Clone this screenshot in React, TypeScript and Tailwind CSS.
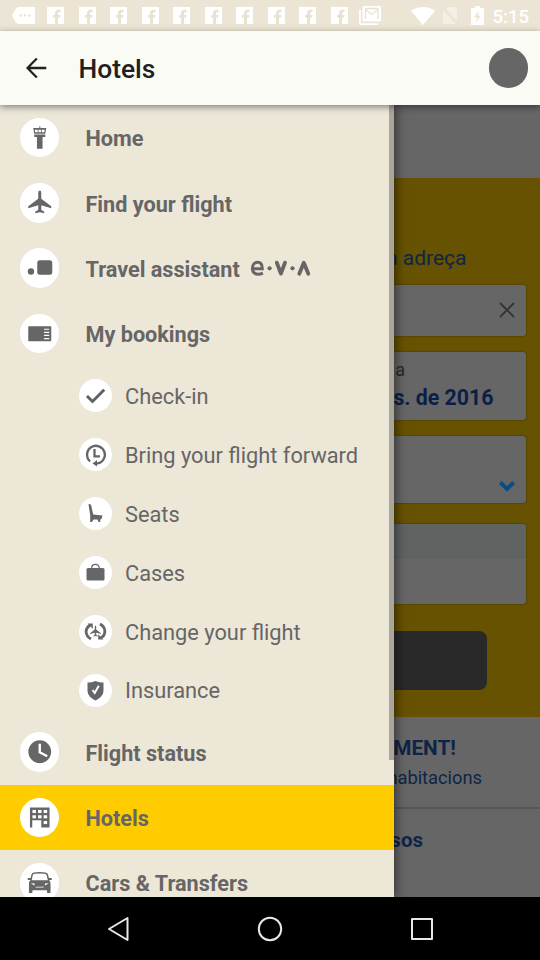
import type { ReactNode } from "react";

const G = "#666666";

function FacebookIcon() {
  return (
    <svg className="mr-[14.500px] h-[17px] w-[17px] shrink-0" viewBox="0 0 17 17">
      <path fill="#fff" d="M0 0H17V17H0Z" />
      <path fill="#e9e2d0" d="M8 17V10.600H6V8H8V6.200C8 4.100 9.200 2.800 11.300 2.800H13.600V5.300H12.200C11.300 5.300 11 5.700 11 6.500V8H13.500L13.100 10.600H11V17Z" />
    </svg>
  );
}

function StatusBar() {
  return (
    <div className="flex h-[31px] shrink-0 items-center bg-[#ece5d5] pl-[12px]">
      <svg className="mr-[12px] h-[17px] w-[23px] shrink-0" viewBox="0 0 23 17">
        <path fill="#fff" d="M7 0H23V17H7C5 17 3.8 15.500 3 14L0 8.500L3 3C4 1 5 0 7 0Z" />
        <g fill="#ece5d5">
          <circle cx="8.500" cy="8.500" r="1.300" />
          <circle cx="13" cy="8.500" r="1.300" />
          <circle cx="17.500" cy="8.500" r="1.300" />
        </g>
      </svg>
      {Array.from({ length: 10 }, (_, i) => (
        <FacebookIcon key={i} />
      ))}
      <svg className="-ml-[3px] h-[19px] w-[22px] shrink-0" viewBox="0 0 22 19">
        <path fill="#fff" d="M0 4H1.800V17.200H19V19H2C.8 19 0 18.200 0 17Z" />
        <rect x="3.500" width="18.500" height="15.500" rx="1.500" fill="#fff" />
        <path fill="none" stroke="#e9e1d1" strokeWidth="1.300" d="M6.500 13V3.500L12.700 8.500L19 3.500V13M6.500 2.500H19" />
      </svg>
      <svg className="ml-[29.500px] h-[18px] w-[24px] shrink-0" viewBox="0 0 24 18">
        <path fill="#fff" d="M12 18L0 4C7-1.300 17-1.300 24 4Z" />
      </svg>
      <svg className="ml-[8px] h-[17px] w-[14px] shrink-0" viewBox="0 0 14 17">
        <path fill="#f5eee6" d="M5 0H14V14L3 2ZM0 3L13 17H1C.3 17 0 16.600 0 16Z" />
      </svg>
      <svg className="ml-[14px] h-[19px] w-[13px] shrink-0" viewBox="0 0 13 19">
        <path fill="#fff" fillRule="evenodd" d="M4 0H9V2H12C12.600 2 13 2.400 13 3V18C13 18.600 12.600 19 12 19H1C.4 19 0 18.600 0 18V3C0 2.400.4 2 1 2H4ZM8 4.500L2.800 11.300H6L5 16.500L10.300 9.500H7Z" />
      </svg>
      <span className="ml-[9px] pt-[3px] text-[18.600px] leading-none font-medium text-white">5:15</span>
    </div>
  );
}

function Header() {
  return (
    <header className="relative z-20 flex h-[74px] shrink-0 items-center bg-[#fafbf4] pl-[26px] pr-[12px] shadow-[0_2px_7px_rgba(0,0,0,0.45)]">
      <svg className="h-[22px] w-[22px]" viewBox="0 0 22 22" fill="none" stroke="#20201e" strokeWidth="2.300">
        <path d="M20.300 11H2M10.800 1.500L1.500 11L10.800 20.500" />
      </svg>
      <h1 className="ml-[30.500px] pt-[3px] text-[26.400px] leading-none font-medium text-[#20201e]">Hotels</h1>
      <div className="ml-auto h-[39.500px] w-[39.500px] rounded-full bg-[#666]" />
    </header>
  );
}

const planePath =
  "M-1.500-9.500C-1.500-12-.8-12 0-12S1.500-12 1.500-9.500V-4L11.500 3.500V5.500L1.500 2.500V7L4.500 9V10.500L0 9.500L-4.500 10.500V9L-1.500 7V2.500L-11.500 5.500V3.500L-1.500-4Z";

const icons: Record<string, ReactNode> = {
  tower: (
    <g fill={G}>
      <path d="M-.4-11.500H.6V-9H-.4Z" />
      <path fillRule="evenodd" d="M-6.500-9.800H6.500L5.500-4H-5.500ZM-5-8L-4.500-5.500H-2V-8ZM-1.200-8V-5.500H1.200V-8ZM2-8V-5.500H4.500L5-8Z" />
      <path d="M-5.500-3.300H5.500V-.8H2.800V11H-2.800V-.8H-5.500Z" />
    </g>
  ),
  plane: <path fill={G} d={planePath} />,
  eva: (
    <g fill={G}>
      <circle cx="-8.800" cy="3.700" r="3.200" />
      <rect x="-2.500" y="-7.500" width="15" height="14.500" rx="2.500" />
    </g>
  ),
  ticket: (
    <g>
      <rect x="-11.500" y="-7.500" width="23" height="15" rx=".7" fill={G} />
      <path stroke="#fff" strokeWidth="1.200" d="M4.300-4.500H9.500M4.300-1.400H9.500M4.300 1.700H9.500M4.300 4.800H9.500" />
    </g>
  ),
  check: <path fill="none" stroke="#5c6262" strokeWidth="2.900" d="M-8.500 .5L-3 6L8.700-5.800" />,
  forward: (
    <g fill="none" stroke={G} strokeWidth="2.300">
      <path d="M-5.400 6.900A8.900 8.900 0 1 1 1 9.100" />
      <path d="M-1-5.500V1.800H4.500" />
      <path fill={G} stroke="none" d="M-3 9L1.500 5.500V12Z" />
    </g>
  ),
  seat: <path fill={G} d="M-7-9.500L-4.500-9L-2.300 1L7 2L6 5.500L4.700 6V8.500H3L2 6H-2L-3.500 8.500H-5.300V2Z" />,
  case: (
    <g>
      <rect x="-9" y="-4.500" width="18" height="12.500" rx="1.500" fill={G} />
      <path fill="none" stroke={G} strokeWidth="1.200" d="M-3.800-4.500C-3.800-9.300 3.800-9.300 3.800-4.500" />
    </g>
  ),
  change: (
    <g>
      <g fill="none" stroke={G} strokeWidth="2.800">
        <path d="M-4.500 7.500C-10.800 4-10.800-3-5.500-6.300" />
        <path d="M4.500-7.500C10.800-4 10.800 3 5.500 6.300" />
      </g>
      <path fill={G} d="M-8-8H-2.700V-2.700ZM8 8H2.700V2.700Z" />
      <path fill={G} transform="scale(.47)" d={planePath} />
    </g>
  ),
  shield: (
    <g>
      <path fill={G} d="M0-9.500C3-8.500 5.500-8 8-8V0C8 5 4 8 0 10C-4 8-8 5-8 0V-8C-5.500-8-3-8.500 0-9.500Z" />
      <path fill="none" stroke="#fff" strokeWidth="2" d="M-3-.5L-.8 2.500L3.300-4.800" />
    </g>
  ),
  clock: (
    <g>
      <circle r="11.400" fill={G} />
      <path fill="none" stroke="#fff" strokeWidth="2.400" d="M0-8V.5L7.500 4.500" />
    </g>
  ),
  hotel: (
    <g>
      <path fill={G} d="M-9.800-10.300H9.800V9.700H1.500V2.500H-7.500V9.700H-9.800Z" />
      <g fill="#fff">
        {[-7.3, -1.700, 3.900].flatMap((x) =>
          [-7.800, -2.500].map((y) => <rect key={`${x}/${y}`} x={x} y={y} width="3.500" height="3.100" />),
        )}
        <rect x="3.900" y="3.200" width="3.500" height="3.100" />
      </g>
    </g>
  ),
  car: (
    <g>
      <path fill="none" stroke={G} strokeWidth="1.500" d="M-9-2L-7.500-8.300C-7.200-9.500-6-10 0-10S7.200-9.500 7.500-8.300L9-2" />
      <path fill={G} fillRule="evenodd" d="M-9-2.500H9C10.800-1.500 10.800 0 10.800 2V9.500C10.800 10.700 7.300 10.700 7.300 9.500V7.500H-7.300V9.500C-7.300 10.700-10.800 10.700-10.800 9.500V2C-10.800 0-10.800-1.500-9-2.500ZM-9 .8L-5 2.800L-5.500 .5ZM9 .8L5 2.800L5.500 .5ZM-4 4.700H4V3.900H-4Z" />
      <path stroke={G} strokeWidth="2" d="M-12-3.700H-8.500M8.500-3.700H12" />
    </g>
  ),
};

function MenuItem({ icon, label, active, logo }: { icon: string; label: string; active?: boolean; logo?: boolean }) {
  return (
    <div className={`flex h-[65.300px] shrink-0 items-center pl-[19.800px] ${active ? "bg-[#ffcc00]" : ""}`}>
      <svg className="h-[39.500px] w-[39.500px] shrink-0 rounded-full bg-white" viewBox="-19.750 -19.750 39.500 39.500">
        {icons[icon]}
      </svg>
      <span className="ml-[26.200px] pt-[3px] text-[21.650px] leading-none font-bold whitespace-nowrap text-[#666]">{label}</span>
      {logo && (
        <svg className="ml-[10px] h-[18px] w-[62px]" viewBox="0 0 62 18" fill="none" stroke={G}>
          <path d="M2.500 9.700H12.300C12.300 5.500 10.800 3.200 7.700 3.200C4.500 3.200 2.400 5.600 2.400 9.300C2.400 13.200 4.500 15.200 8.200 15.200C10 15.200 11.500 14.800 12.900 14.100" strokeWidth="3" />
          <path d="M26.800 3.600L30.900 14.600L35 3.600M49.300 14.800L53.800 3.800L58.300 14.800" strokeWidth="3.800" strokeLinejoin="round" strokeLinecap="round" />
          <circle cx="19.600" cy="9.300" r="2.100" fill={G} stroke="none" />
          <circle cx="42.500" cy="9.300" r="2.100" fill={G} stroke="none" />
        </svg>
      )}
    </div>
  );
}

function SubItem({ icon, label }: { icon: string; label: string }) {
  return (
    <div className="flex h-[58.900px] shrink-0 items-center pl-[79px]">
      <svg className="h-[33px] w-[33px] shrink-0 rounded-full bg-white" viewBox="-16.500 -16.500 33 33">
        {icons[icon]}
      </svg>
      <span className="ml-[13px] pt-[2.600px] text-[21.800px] leading-none whitespace-nowrap text-[#666]">{label}</span>
    </div>
  );
}

function Drawer() {
  return (
    <nav className="absolute inset-y-0 left-0 z-10 w-[393.500px] bg-[#ede7d8] shadow-[2px_0_10px_rgba(0,0,0,0.5)]">
      <div className="flex flex-col">
        <MenuItem icon="tower" label="Home" />
        <MenuItem icon="plane" label="Find your flight" />
        <MenuItem icon="eva" label="Travel assistant" logo />
        <MenuItem icon="ticket" label="My bookings" />
        <SubItem icon="check" label="Check-in" />
        <SubItem icon="forward" label="Bring your flight forward" />
        <SubItem icon="seat" label="Seats" />
        <SubItem icon="case" label="Cases" />
        <SubItem icon="change" label="Change your flight" />
        <SubItem icon="shield" label="Insurance" />
        <MenuItem icon="clock" label="Flight status" />
        <MenuItem icon="hotel" label="Hotels" active />
        <MenuItem icon="car" label="Cars & Transfers" />
      </div>
      <div className="absolute top-0 right-0 h-[655px] w-[5px] bg-[#aaa69c]" />
    </nav>
  );
}

const card = "rounded-[3px] bg-[#666] shadow-[0_0_2px_rgba(40,30,0,0.7)]";

function BookingPage() {
  return (
    <div className="flex h-full flex-col bg-[#666] text-right leading-none whitespace-nowrap text-[#0e2546]">
      <div className="h-[72.500px] shrink-0" />
      <div className="flex h-[539px] shrink-0 flex-col bg-[#665200] px-[14px]">
        <div className="mt-[70px] h-[22px] pr-[59.500px] text-[21px]">n adreça</div>
        <div className={`mt-[15px] flex h-[51px] shrink-0 items-center justify-end pr-[11px] ${card}`}>
          <svg className="h-[16px] w-[16px]" viewBox="0 0 16 16" stroke="#343434" strokeWidth="1.900">
            <path d="M1 1L15 15M15 1L1 15" />
          </svg>
        </div>
        <div className={`mt-[16px] h-[68px] shrink-0 pt-[9px] ${card}`}>
          <div className="pr-[121px] text-[18px] text-[#292929]">a</div>
          <div className="mt-[8px] pr-[32.500px] text-[21.300px] font-bold text-[#0b1f46]">s. de 2016</div>
        </div>
        <div className={`mt-[16.500px] flex h-[67px] shrink-0 items-end justify-end pr-[11px] pb-[11px] ${card}`}>
          <svg className="h-[11px] w-[16px]" viewBox="0 0 16 11" fill="none" stroke="#0c4d80" strokeWidth="4">
            <path d="M1.300 1.500L8 8L14.700 1.500" />
          </svg>
        </div>
        <div className={`mt-[20.500px] h-[80px] shrink-0 overflow-hidden ${card}`}>
          <div className="h-[34px] border-b border-[#566060] bg-[#5f6463]" />
        </div>
        <div className="mt-[27px] mr-[39px] h-[59px] shrink-0 rounded-[8px] bg-[#292929]" />
      </div>
      <div className="h-[92px] shrink-0 border-b-2 border-[#555] pt-[21px]">
        <div className="pr-[84px] text-[20.800px] font-bold">MENT!</div>
        <div className="mt-[11px] pr-[58px] text-[18.300px]">habitacions</div>
      </div>
      <div className="pt-[21px] pr-[117px] text-[20.500px] font-bold">sos</div>
    </div>
  );
}

function NavigationBar() {
  return (
    <div className="relative z-30 flex h-[63px] shrink-0 items-center bg-black pl-[107px]">
      <svg className="h-[26px] w-[23px]" viewBox="0 0 23 26" fill="none" stroke="#e8e8e8" strokeWidth="2" strokeLinejoin="round">
        <path d="M20.500 2V24L2 13Z" />
      </svg>
      <svg className="ml-[127px] h-[26px] w-[26px]" viewBox="0 0 26 26" fill="none" stroke="#e8e8e8" strokeWidth="2">
        <circle cx="13" cy="13" r="11.200" />
      </svg>
      <svg className="ml-[126px] h-[26px] w-[26px]" viewBox="0 0 26 26" fill="none" stroke="#e8e8e8" strokeWidth="2" strokeLinejoin="round">
        <rect x="3" y="3" width="20" height="20" />
      </svg>
    </div>
  );
}

export default function App() {
  return (
    <div className="flex h-[960px] w-[540px] flex-col overflow-hidden bg-black font-[Roboto,sans-serif]">
      <StatusBar />
      <Header />
      <main className="relative h-[792px] shrink-0 overflow-hidden">
        <BookingPage />
        <Drawer />
      </main>
      <NavigationBar />
    </div>
  );
}
